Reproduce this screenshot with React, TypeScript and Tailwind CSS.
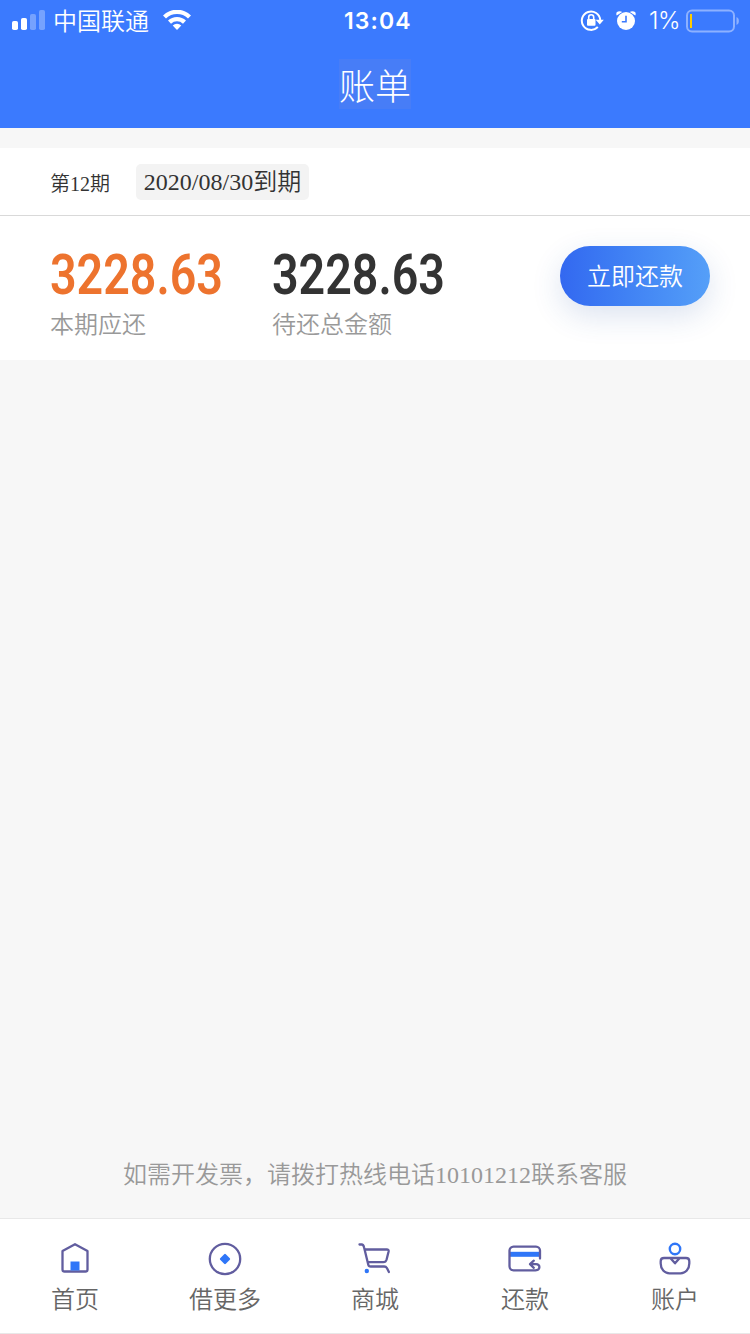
import type { ReactNode } from "react";

const PURPLE = "#615d9f";
const BLUE = "#2f76f8";

function StatusBar() {
  return (
    <div className="relative flex h-[41px] items-center justify-between pl-3 pr-[10px] font-['Inter','Noto_Sans_CJK_SC',sans-serif] text-white">
      <div className="flex items-center">
        <svg width="34" height="22" viewBox="0 0 34 22" fill="#fff">
          <rect x="0" y="11" width="6" height="9" rx="1.8" />
          <rect x="9" y="8" width="6" height="12" rx="1.8" />
          <rect x="18" y="4" width="6" height="16" rx="1.8" opacity=".3" />
          <rect x="27" y="0" width="6" height="20" rx="1.8" opacity=".3" />
        </svg>
        <span className="ml-[7px] pb-[2px] font-['Noto_Sans_CJK_SC',sans-serif] text-[24px] leading-[39px] font-[350]">中国联通</span>
        <svg className="ml-[13px]" width="30" height="22" viewBox="0 0 30 22" fill="#fff">
          <path d="M1 5.4a20 20 0 0 1 28 0l-3 3.2a15.7 15.7 0 0 0-22 0z" />
          <path d="M6 10.6a13 13 0 0 1 18 0l-3 3.1a8.7 8.7 0 0 0-12 0z" />
          <path d="M10.7 15.6a6.2 6.2 0 0 1 8.6 0L15 20z" />
        </svg>
      </div>
      <span className="absolute left-[344px] top-0 text-[23px] leading-[42px] font-semibold tracking-[1.1px]">13:04</span>
      <div className="flex items-center">
        <svg width="24" height="24" viewBox="0 0 24 24" fill="none">
          <path d="M17.8 17.9A9.2 9.2 0 1 1 20.2 11" stroke="#fff" strokeWidth="2" />
          <path d="M15.7 10.7h8.1L19.8 15.6z" fill="#fff" />
          <rect x="7" y="9.9" width="8.5" height="6.8" rx="1" fill="#fff" />
          <path d="M8.7 10.5V8.3a2.5 2.5 0 0 1 5 0v2.2" stroke="#fff" strokeWidth="1.6" />
        </svg>
        <svg className="ml-[12px]" width="20" height="22" viewBox="0 0 20 22" fill="#fff">
          <path d="M.7 5.4Q-.6 2.4 2 1.5q2.4-.8 4.2.5zM19.3 5.4q1.3-3-1.3-3.9-2.4-.8-4.2.5z" />
          <circle cx="10" cy="11" r="9" />
          <path d="M10 5.7v6H5.8" fill="none" stroke="#3b7afe" strokeWidth="1.6" />
        </svg>
        <span className="ml-[13px] w-[31px] whitespace-nowrap pt-px text-[24px] leading-10 font-[350] tracking-[-0.5px]">1%</span>
        <svg className="ml-[6px]" width="54" height="24" viewBox="0 0 54 24" fill="none">
          <rect x="1" y="1.5" width="47" height="21" rx="5" stroke="#8db1ff" strokeWidth="2" />
          <rect x="4" y="5" width="2" height="14" fill="#fc0" />
          <path d="M50.5 8c3.2 1.200 3.200 6.800 0 8z" fill="#8db1ff" />
        </svg>
      </div>
    </div>
  );
}

function Amount({ value, label, tone, className }: { value: string; label: string; tone: string; className: string }) {
  return (
    <div className={className}>
      <div className={`h-[60px] origin-left scale-x-[0.832] whitespace-nowrap font-['Roboto',sans-serif] text-[56px] leading-[59px] font-semibold ${tone}`}>
        {value}
      </div>
      <div className="mt-[3px] whitespace-nowrap text-[24px] leading-8 font-[350] text-[#999]">{label}</div>
    </div>
  );
}

function Tab({ label, children }: { label: string; children: ReactNode }) {
  return (
    <a className="flex flex-1 flex-col items-center pt-[22px]">
      <svg width="36" height="36" viewBox="0 0 36 36" fill="none" stroke={PURPLE} strokeWidth="2.3" strokeLinecap="round" strokeLinejoin="round">
        {children}
      </svg>
      <span className="mt-[7px] text-[24px] leading-8 font-[350] text-[#666]">{label}</span>
    </a>
  );
}

export default function App() {
  return (
    <div className="flex h-[1334px] w-[750px] flex-col overflow-hidden bg-[#f7f7f7] font-['Liberation_Serif','Noto_Sans_CJK_SC',sans-serif]">
      <header className="h-32 shrink-0 bg-[#3b7afe]">
        <StatusBar />
        <div className="flex justify-center pt-[18px]">
          <h1 className="h-[50px] w-[72px] bg-[#477df7] text-center font-['Noto_Sans_CJK_SC',sans-serif] text-[36px] leading-[50px] font-light text-white">账单</h1>
        </div>
      </header>

      <section className="mt-5 h-[212px] shrink-0 bg-white">
        <div className="flex h-[68px] items-center border-b border-[#d9d9d9] pl-[50px] font-[350] text-[#333]">
          <span className="mt-[5px] w-[86px] text-[20px] leading-8">第12期</span>
          <span className="h-9 w-[173px] rounded-[5px] bg-[#f3f3f3] text-center text-[24px] leading-[37px]">2020/08/30到期</span>
        </div>
        <div className="flex pl-[50px] pr-10 pt-[30px]">
          <Amount className="w-[222px]" value="3228.63" label="本期应还" tone="text-[#ed732e]" />
          <Amount className="w-[222px]" value="3228.63" label="待还总金额" tone="text-[#333]" />
          <button className="ml-auto h-[60px] w-[150px] rounded-full bg-linear-to-r from-[#3368f0] to-[#559ff8] pt-[2px] text-[24px] leading-[58px] font-[350] text-white shadow-[0_10px_30px_rgba(40,80,160,0.16)]">立即还款</button>
        </div>
      </section>

      <main className="flex flex-1 items-end justify-center pb-[27px]">
        <p className="whitespace-nowrap text-[24px] leading-8 font-[350] text-[#999]">如需开发票，请拨打热线电话10101212联系客服</p>
      </main>

      <nav className="flex h-[116px] shrink-0 border-y border-[#e8e8e8] bg-white">
        <Tab label="首页">
          <path d="M18 3.2 30.5 10v18.5a2 2 0 0 1-2 2h-21a2 2 0 0 1-2-2V10z" />
          <path d="M13.5 20.5h9v9h-9z" fill={BLUE} stroke="none" />
        </Tab>
        <Tab label="借更多">
          <circle cx="18" cy="18" r="15.2" />
          <path d="m18 14 4 4-4 4-4-4z" fill={BLUE} stroke={BLUE} />
        </Tab>
        <Tab label="商城">
          <path d="M2.5 3.5h2.2c1.6 0 2 1.1 2.4 3l4.2 17.2c.3 1.3 1 1.8 2.5 1.8h13.4c1.3 0 2.1.5 2.7 1.5l2 4M7.8 8.5h22c1.4 0 2 .8 1.8 2l-2 8c-.5 1.7-1.4 2.7-3.2 2.7H11" />
          <circle cx="9.8" cy="30" r="2.2" fill={BLUE} stroke="none" />
        </Tab>
        <Tab label="还款">
          <path d="M3 10.8h29v5H3z" fill={BLUE} stroke="none" />
          <path d="M33 17.5V9.6a4 4 0 0 0-4-4H6.5a4 4 0 0 0-4 4v15.7a4 4 0 0 0 4 4H28.5c5 0 5.2-6.1.5-6.1h-5.5m3.3-3.5-3.8 3.5 3.8 3.6" />
        </Tab>
        <Tab label="账户">
          <circle cx="18" cy="8" r="5.2" stroke={BLUE} strokeWidth="2.4" />
          <path d="M7 17h22c2.1 0 3.3 1.3 3.3 3.3v2.2c0 5.8-3.8 9.8-8.8 9.8h-11c-5 0-8.8-4-8.8-9.8v-2.2C3.7 18.3 4.900 17 7 17ZM13.500 17.300 18 22.300l4.500-5" />
        </Tab>
      </nav>
    </div>
  );
}
